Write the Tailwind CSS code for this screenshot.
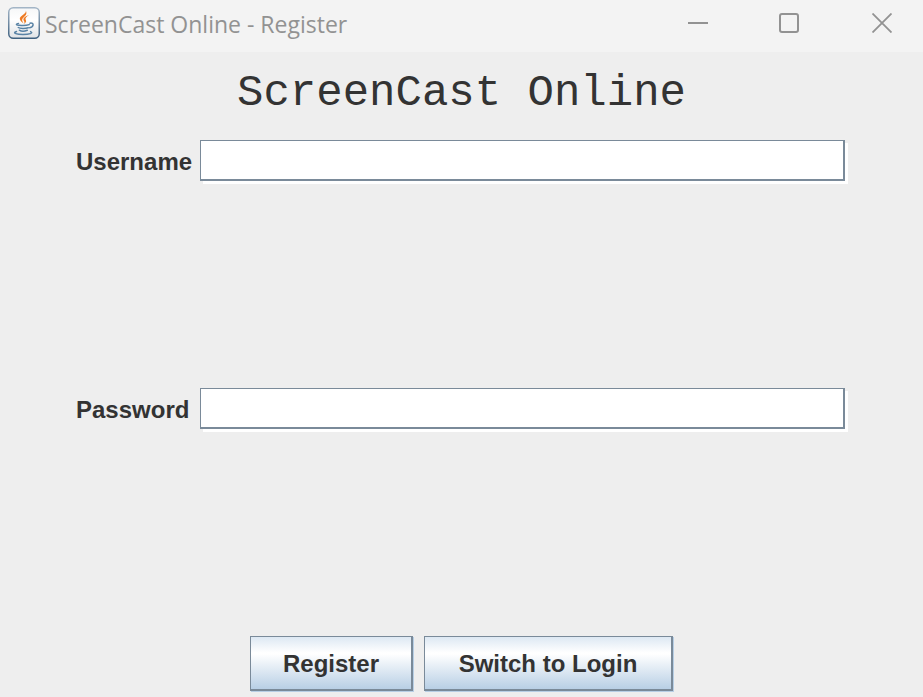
<!DOCTYPE html>
<html lang="en">
<head>
<meta charset="utf-8">
<meta name="viewport" content="width=device-width, initial-scale=1">
<title>ScreenCast Online - Register</title>
<script src="https://cdn.jsdelivr.net/npm/@tailwindcss/browser@4"></script>
</head>
<body class="min-h-screen flex flex-col bg-[#eeeeee] text-[#333333] font-['Liberation_Sans',sans-serif]">
  <header class="flex h-[52px] items-start justify-between bg-[#f3f3f3] pl-2 text-[#929292]">
    <div class="flex items-start gap-[5px] pt-[7px]">
      <svg class="size-8" viewBox="0 0 32 32" fill="none" aria-hidden="true">
        <defs>
          <linearGradient id="face" x1="0" y1="0" x2="0" y2="1"><stop stop-color="#f6f7f8"/><stop offset=".4" stop-color="#fff"/><stop offset="1" stop-color="#dfe3e6"/></linearGradient>
          <linearGradient id="rim" x1="0" y1="0" x2="0" y2="1"><stop stop-color="#a3b5c6"/><stop offset="1" stop-color="#3f6180"/></linearGradient>
        </defs>
        <rect x=".75" y=".75" width="30.5" height="30.5" rx="4.5" fill="url(#face)" stroke="url(#rim)" stroke-width="1.5"/>
        <path d="M17.800 3.500c1.200 3.600-6.300 5-6 8.600.2 1.800 2.400 3 3.800 4.600-.9-2.100-2.100-3.300-1.100-4.900 1.300-2.200 5.500-4 3.300-8.300Z" fill="#ee7a22"/>
        <path d="M21 8c-3.500 1.200-6 2.900-5.500 5 .3 1.300 1.700 1.700.6 3.900 2.700-1.600 2.100-3.200 1.500-4.300-.6-1.700 1.300-3.100 3.400-4.600Z" fill="#ee7a22"/>
        <g stroke="#5882a5" stroke-linecap="round" stroke-width="1.500">
          <path d="M10.500 16.400c-5 1.400.3 2.200 4.500 2 2.300 0 4.600-.3 6.200-.8"/>
          <path d="M10.300 20.500c1.500 1.200 7.200 1.200 10 .2"/>
          <path d="M11.400 23.200c1.700 1.200 5.400 1.200 7.900.1"/>
          <path d="M22 16.200c4.600-.8 3.700 3.700-.3 4.500"/>
          <path d="M8.500 24.500c-5 1.700.8 2.900 6.500 2.900 6.200 0 11-1.200 7.600-2.800"/>
        </g>
      </svg>
      <span class="pt-px font-['Open_Sans',sans-serif] text-[23px] leading-8">ScreenCast Online - Register</span>
    </div>
    <div class="flex">
      <button type="button" aria-label="Minimize" class="flex h-[46px] w-[92px] items-center justify-center">
        <svg class="size-5" viewBox="0 0 20 20" stroke="currentColor" stroke-width="2"><path d="M0 10h20"/></svg>
      </button>
      <button type="button" aria-label="Maximize" class="flex h-[46px] w-[90px] items-center justify-center">
        <svg class="size-5" viewBox="0 0 20 20" fill="none" stroke="currentColor" stroke-width="2"><rect x="1" y="1" width="18" height="18" rx="2"/></svg>
      </button>
      <button type="button" aria-label="Close" class="flex h-[46px] w-[89px] items-center pl-[38px]">
        <svg class="size-5" viewBox="0 0 20 20" stroke="currentColor" stroke-width="1.800"><path d="m.5.5 19 19M19.500.5l-19 19"/></svg>
      </button>
    </div>
  </header>

  <main class="flex flex-1 flex-col pb-[6px]">
    <h1 class="flex h-[88px] items-start justify-center pt-4 font-['Liberation_Mono',monospace] text-[44px] leading-[50px]">ScreenCast Online</h1>
    <form class="flex flex-1 flex-col justify-between text-2xl font-bold">
      <div class="flex items-center pl-[76px] pr-[78px]">
        <label for="username" class="w-[124px] shrink-0 pt-[2px]">Username</label>
        <input id="username" type="text" autocomplete="off" class="h-[41px] min-w-0 flex-1 border border-r-2 border-b-2 border-[#7a8a99] bg-white px-1 font-normal shadow-[3px_3px_0_#ffffff] outline-none">
      </div>
      <div class="flex items-center pl-[76px] pr-[78px]">
        <label for="password" class="w-[124px] shrink-0 pt-[2px]">Password</label>
        <input id="password" type="password" autocomplete="off" class="h-[41px] min-w-0 flex-1 border border-r-2 border-b-2 border-[#7a8a99] bg-white px-1 font-normal shadow-[3px_3px_0_#ffffff] outline-none">
      </div>
      <div class="flex justify-center gap-[11px]">
        <button type="submit" class="h-[55px] border border-r-2 border-b-2 border-[#7a8a99] bg-[linear-gradient(to_bottom,#dde8f3_0%,#ffffff_30%,#ffffff_33%,#b8cfe5_100%)] px-8 pt-[2px] shadow-[1px_1px_0_#b8cfe5]">Register</button>
        <button type="button" class="h-[55px] w-[249px] border border-r-2 border-b-2 border-[#7a8a99] bg-[linear-gradient(to_bottom,#dde8f3_0%,#ffffff_30%,#ffffff_33%,#b8cfe5_100%)] pt-[2px] shadow-[1px_1px_0_#b8cfe5]">Switch to Login</button>
      </div>
    </form>
  </main>
</body>
</html>
